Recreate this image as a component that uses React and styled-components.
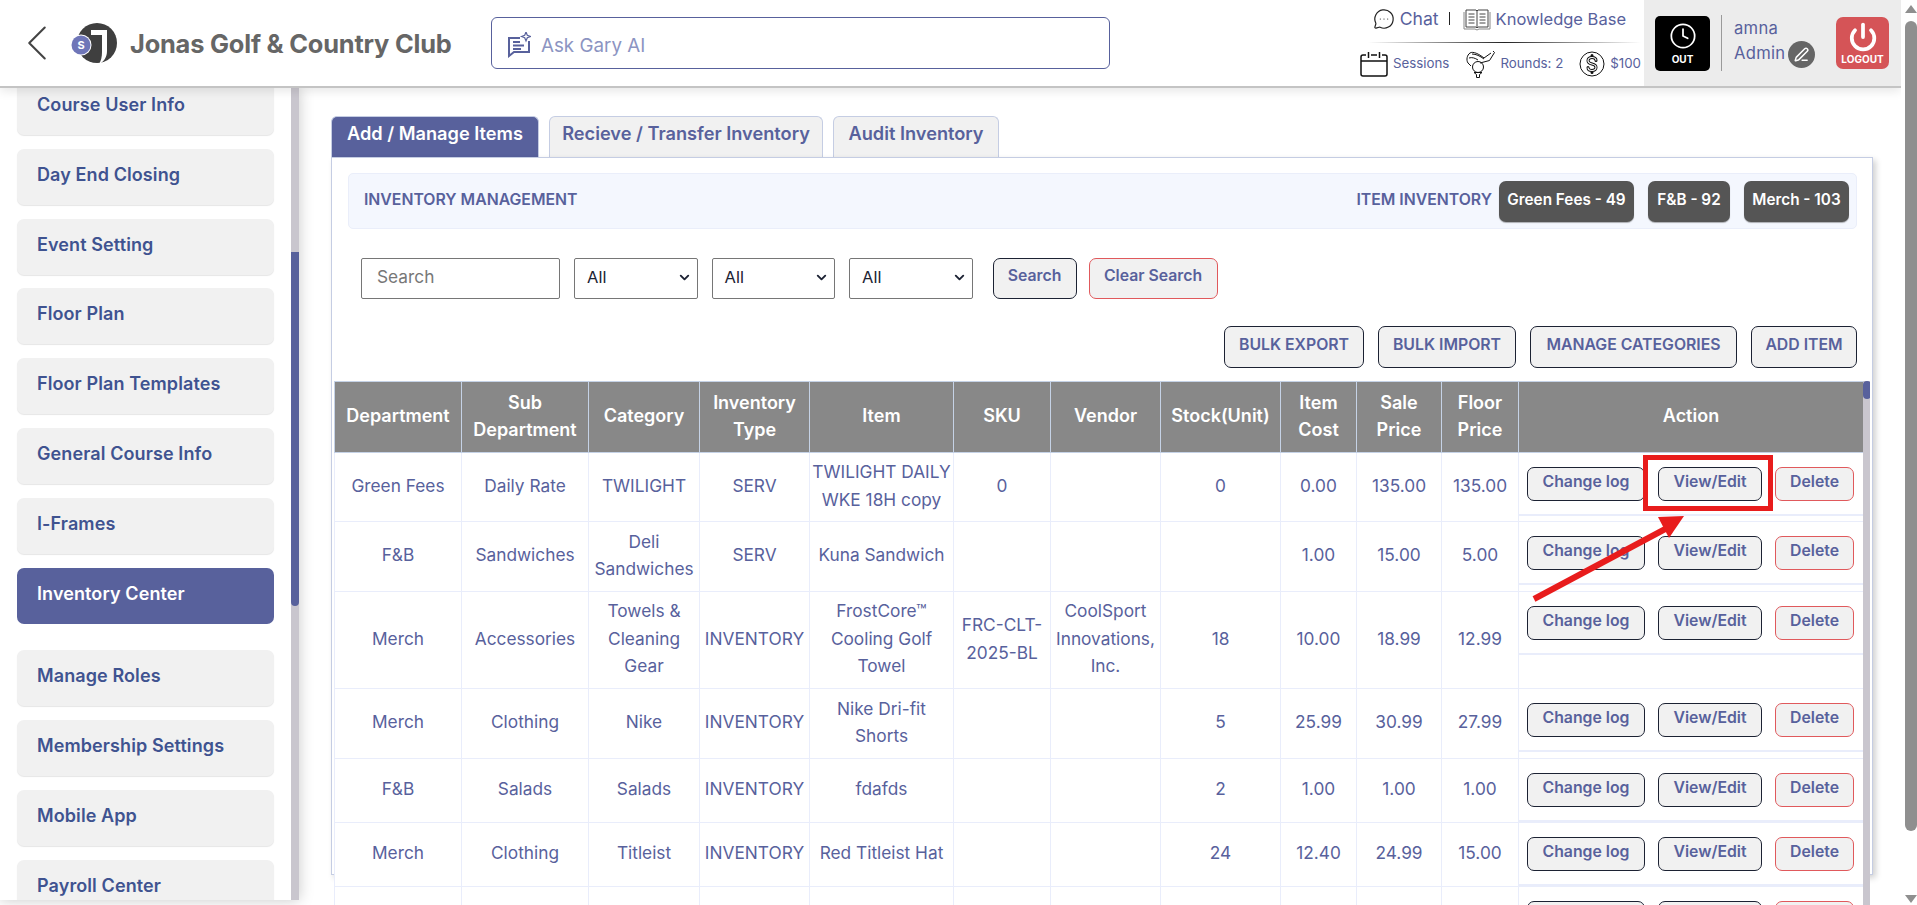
import React from 'react';
import styled, { createGlobalStyle } from 'styled-components';
import { ChevronLeft, Clock, Power, PenLine, MessageCircleMore, ChevronDown } from 'lucide-react';

const GlobalStyle = createGlobalStyle`
    html, body {
        margin: 0;
        height: 100%;
        overflow: hidden;
        background: #fff;
        font-family: "Inter", "Liberation Sans", sans-serif;
    }
    * { box-sizing: border-box; }
`;

const Page = styled.div`
    display: flex;
    width: 1917px;
    height: 905px;
    overflow: hidden;
`;

const Content = styled.div`
    width: 1901px;
    height: 905px;
    display: flex;
    flex-direction: column;
    overflow: hidden;
`;

const PageScroll = styled.div`
    width: 16px;
    height: 905px;
    display: flex;
    flex-direction: column;
    align-items: flex-end;
    background: #fff;
    padding-top: 5px;
`;

const ArrowUp = styled.div`
    width: 0;
    height: 0;
    border-left: 6px solid transparent;
    border-right: 6px solid transparent;
    border-bottom: 8px solid #8f8f8f;
`;

const ArrowDown = styled(ArrowUp)`
    margin-top: 64px;
    border-bottom: 0;
    border-top: 8px solid #8f8f8f;
`;

const PageThumb = styled.div`
    width: 12px;
    height: 810px;
    margin-top: 8px;
    background: #8f8f8f;
    border-radius: 6px;
`;

/* header */
const Header = styled.header`
    height: 88px;
    flex: none;
    display: flex;
    align-items: stretch;
    background: #fff;
    border-bottom: 2px solid #c4c4c4;
    box-shadow: 0 3px 10px rgba(0, 0, 0, 0.1);
    position: relative;
    z-index: 3;
`;

const Brand = styled.div`
    width: 491px;
    flex: none;
    display: flex;
    align-items: center;
    padding-left: 6px;
`;

const BackIcon = styled(ChevronLeft)`
    width: 62px;
    height: 62px;
    color: #444;
    stroke-width: 0.8;
    flex: none;
`;

const LogoBox = styled.svg`
    width: 52px;
    height: 44px;
    flex: none;
`;

const BrandName = styled.h1`
    margin: 0 0 0 10px;
    font-size: 25.4px;
    font-weight: 700;
    letter-spacing: -0.2px;
    color: #666;
    white-space: nowrap;
`;

const AskBox = styled.div`
    width: 619px;
    height: 52px;
    margin-top: 17px;
    flex: none;
    display: flex;
    align-items: center;
    gap: 10px;
    padding: 4px 0 0 15px;
    border: 1px solid #58619c;
    border-radius: 6px;
`;

const AskText = styled.span`
    font-size: 18.8px;
    color: #8c94c2;
`;

const Links = styled.div`
    flex: 1;
    display: flex;
    flex-direction: column;
    align-items: flex-end;
    padding-right: 3px;
`;

const LinkRow = styled.div`
    height: 42px;
    display: flex;
    align-items: center;
    gap: 5px;
    padding: 0 15px 5px 0;
    color: #58619c;
    font-size: 16.5px;
`;

const ChatLabel = styled.span`
    font-size: 17.6px;
`;

const Sep = styled.span`
    width: 1px;
    height: 13px;
    margin: 0 8px 0 5px;
    background: #222;
`;

const Rule = styled.div`
    width: 273px;
    height: 1px;
    flex: none;
    background: linear-gradient(90deg, transparent, #222 50%, transparent);
`;

const StatRow = styled.div`
    display: flex;
    align-items: center;
    gap: 5px;
    height: 42px;
    color: #58619c;
    font-size: 13.3px;
`;

const StatText = styled.span`
    padding-bottom: 2px;
`;

const StatGap = styled.span`
    width: 6px;
`;

const UserBlock = styled.div`
    width: 257px;
    flex: none;
    display: flex;
    align-items: center;
    background: #ececec;
    padding-left: 11px;
`;

const OutButton = styled.div`
    width: 55px;
    height: 55px;
    flex: none;
    display: flex;
    flex-direction: column;
    align-items: center;
    justify-content: center;
    gap: 3px;
    background: #000;
    border-radius: 5px;
    color: #fff;
    font-size: 10px;
    font-weight: 700;
`;

const UserDivider = styled.div`
    width: 1px;
    height: 56px;
    margin: 0 12px 0 11px;
    background: #9a9a9a;
`;

const UserInfo = styled.div`
    width: 102px;
    flex: none;
    margin-bottom: 2px;
    color: #58619c;
    font-size: 16.6px;
    letter-spacing: 0.3px;
`;

const UserName = styled.div`
    line-height: 25px;
`;

const RoleRow = styled.div`
    display: flex;
    align-items: center;
    gap: 3px;
    height: 28px;
`;

const RoleLabel = styled.span`
    padding-bottom: 4px;
`;

const EditBadge = styled.span`
    width: 27px;
    height: 27px;
    display: inline-flex;
    align-items: center;
    justify-content: center;
    background: #666;
    border-radius: 50%;
    color: #fff;
`;

const LogoutButton = styled.div`
    width: 53px;
    height: 52px;
    flex: none;
    display: flex;
    flex-direction: column;
    align-items: center;
    justify-content: center;
    gap: 1px;
    background: #d55457;
    border-radius: 7px;
    color: #fff;
    font-size: 10px;
    font-weight: 700;
`;

/* body */
const Body = styled.div`
    flex: 1;
    display: flex;
    min-height: 0;
    overflow: hidden;
`;

const Sidebar = styled.aside`
    width: 299px;
    height: 812px;
    flex: none;
    display: flex;
    background: #fff;
    box-shadow: 0 0 14px rgba(0, 0, 0, 0.22);
    position: relative;
    z-index: 2;
`;

const SideList = styled.nav`
    width: 291px;
    padding: 0 17px;
    overflow: hidden;
`;

const SideInner = styled.div`
    margin-top: -9px;
    display: flex;
    flex-direction: column;
    gap: 13.8px;
`;

const SideItem = styled.div`
    height: 56px;
    flex: none;
    padding: 14px 0 0 20px;
    margin-bottom: ${p => (p.$active ? '13px' : '0')};
    background: ${p => (p.$active ? '#58619c' : '#f1f1f1')};
    border-radius: 7px;
    box-shadow: ${p => (p.$active ? 'none' : '0 1px 1px rgba(0, 0, 0, 0.1)')};
    color: ${p => (p.$active ? '#fff' : '#3f5390')};
    font-size: 18px;
    font-weight: 600;
    letter-spacing: 0.1px;
    line-height: 24px;
`;

const SideTrack = styled.div`
    width: 8px;
    background: #c9c6ce;
`;

const SideThumb = styled.div`
    width: 8px;
    height: 354px;
    margin-top: 164px;
    background: #58619c;
    border-radius: 0 0 4px 4px;
`;

const Main = styled.main`
    flex: 1;
    min-width: 0;
    padding: 28px 28px 0 32px;
`;

const Tabs = styled.div`
    display: flex;
    gap: 10px;
    height: 41px;
    align-items: flex-end;
`;

const Tab = styled.div`
    height: 41px;
    width: ${p => p.$w}px;
    display: flex;
    justify-content: center;
    padding-top: 5px;
    background: ${p => (p.$active ? '#58619c' : '#f1f1f1')};
    color: ${p => (p.$active ? '#fff' : '#58619c')};
    border: 1px solid #c5cde3;
    border-bottom: 0;
    border-radius: 6px 6px 0 0;
    font-size: 18.2px;
    font-weight: 600;
    white-space: nowrap;
`;

const Card = styled.section`
    height: 718px;
    padding: 15px 15px 0 16px;
    position: relative;
    border: 1px solid #c5cde3;
    box-shadow: 3px 3px 6px rgba(0, 0, 0, 0.18);
    background: #fff;
`;

const InfoStrip = styled.div`
    height: 56px;
    display: flex;
    align-items: center;
    padding: 0 7px 0 15px;
    background: #f4f7fe;
    border: 1px solid #eaeefa;
    border-radius: 5px;
`;

const StripTitle = styled.span`
    color: #58619c;
    font-size: 15.8px;
    font-weight: 600;
    padding-bottom: 3px;
`;

const StripLabel = styled(StripTitle)`
    margin-left: auto;
    margin-right: 7px;
`;

const Badge = styled.span`
    height: 41px;
    width: ${p => p.$w}px;
    display: flex;
    align-items: center;
    justify-content: center;
    padding-bottom: 3px;
    margin-left: ${p => p.$gap}px;
    background: #555;
    border-radius: 7px;
    color: #fff;
    font-size: 15.3px;
    font-weight: 600;
    box-shadow: 0 1px 1px rgba(0, 0, 0, 0.3);
`;

const Filters = styled.div`
    display: flex;
    gap: 14px;
    margin: 29px 0 0 13px;
    height: 41px;
`;

const SearchInput = styled.div`
    width: 199px;
    display: flex;
    align-items: center;
    padding: 0 15px 4px;
    border: 1px solid #767676;
    border-radius: 2px;
    color: #777;
    font-size: 17.3px;
`;

const Select = styled.div`
    width: 123.5px;
    display: flex;
    align-items: center;
    justify-content: space-between;
    padding: 0 5px 3px 12px;
    border: 1px solid #767676;
    border-radius: 2px;
    color: #1c2233;
    font-size: 16.5px;
`;

const Button = styled.div`
    width: ${p => p.$w}px;
    height: ${p => p.$h || 42}px;
    flex: none;
    display: flex;
    align-items: center;
    justify-content: center;
    padding-bottom: ${p => p.$lift || 6}px;
    margin-left: ${p => p.$push || 0}px;
    background: #f1f1f1;
    border: 1px solid ${p => (p.$danger ? '#e0595c' : '#1c2233')};
    border-radius: 7px;
    color: #58619c;
    font-size: 15.8px;
    font-weight: 600;
    white-space: nowrap;
`;

const ActionsBar = styled.div`
    display: flex;
    justify-content: flex-end;
    gap: 14px;
    margin-top: 27px;
`;

const TableWrap = styled.div`
    margin: 13px -13px 0 -14px;
    display: flex;
    height: 526px;
    overflow: hidden;
`;

const TableBox = styled.div`
    width: 1529px;
    flex: none;
`;

const Table = styled.table`
    width: 1529px;
    border-collapse: collapse;
    table-layout: fixed;
    background: #fff;
`;

const Col = styled.col`
    width: ${p => p.$w}px;
`;

const HeadRow = styled.tr`
    height: 71px;
    background: #888;
`;

const Th = styled.th`
    padding: 0 2px 2px;
    border: 1px solid #c5d2e6;
    color: #fff;
    font-size: 18px;
    font-weight: 600;
    line-height: 27.5px;
    text-align: center;
    white-space: pre-line;
`;

const Row = styled.tr`
    height: ${p => p.$h}px;
`;

const Td = styled.td`
    padding: 0 1px 3px;
    border: 1px solid #e9edfb;
    color: #58619c;
    font-size: 17.3px;
    line-height: 27.5px;
    text-align: center;
    white-space: pre-line;
`;

const ActionTd = styled(Td)`
    padding: 0;
    vertical-align: top;
`;

const ActionBox = styled.div`
    height: 63px;
    display: flex;
    gap: 13px;
    padding: 14px 0 0 8px;
    border-bottom: 2px solid #e9edfb;
`;

const TableScroll = styled.div`
    width: 8px;
    flex: none;
    background: #c9c6ce;
`;

const TableThumb = styled.div`
    width: 8px;
    height: 18px;
    background: #58619c;
    border-radius: 4px;
`;

const Overlay = styled.svg`
    position: absolute;
    left: 1643px;
    top: 455px;
    width: 135px;
    height: 150px;
    z-index: 5;
    overflow: visible;
`;

const items = [
    'Course User Info', 'Day End Closing', 'Event Setting', 'Floor Plan', 'Floor Plan Templates',
    'General Course Info', 'I-Frames', 'Inventory Center', 'Manage Roles', 'Membership Settings',
    'Mobile App', 'Payroll Center',
];

const colWidths = [127, 127, 111, 110, 144, 97, 110, 120, 76, 85, 77, 345];

const heads = [
    'Department', 'Sub\nDepartment', 'Category', 'Inventory\nType', 'Item', 'SKU', 'Vendor',
    'Stock(Unit)', 'Item\nCost', 'Sale\nPrice', 'Floor\nPrice', 'Action',
];

const rows = [
    { h: 69, cells: ['Green Fees', 'Daily Rate', 'TWILIGHT', 'SERV', 'TWILIGHT DAILY\nWKE 18H copy', '0', '', '0', '0.00', '135.00', '135.00'] },
    { h: 70, cells: ['F&B', 'Sandwiches', 'Deli\nSandwiches', 'SERV', 'Kuna Sandwich', '', '', '', '1.00', '15.00', '5.00'] },
    { h: 97, cells: ['Merch', 'Accessories', 'Towels &\nCleaning\nGear', 'INVENTORY', 'FrostCore™\nCooling Golf\nTowel', 'FRC-CLT-\n2025-BL', 'CoolSport\nInnovations,\nInc.', '18', '10.00', '18.99', '12.99'] },
    { h: 70, cells: ['Merch', 'Clothing', 'Nike', 'INVENTORY', 'Nike Dri-fit\nShorts', '', '', '5', '25.99', '30.99', '27.99'] },
    { h: 64, cells: ['F&B', 'Salads', 'Salads', 'INVENTORY', 'fdafds', '', '', '2', '1.00', '1.00', '1.00'] },
    { h: 64, cells: ['Merch', 'Clothing', 'Titleist', 'INVENTORY', 'Red Titleist Hat', '', '', '24', '12.40', '24.99', '15.00'] },
    { h: 64, blank: true, cells: ['', '', '', '', '', '', '', '', '', '', ''] },
];

const Logo = () => (
    <LogoBox viewBox="0 0 52 44">
        <circle cx="29" cy="22" r="20" fill="#3f3f3f" />
        <path d="M23 9h16v21c0 6-3 10-7 13h-1c2-3 3-7 3-12V14h-11z" fill="#fff" />
        <circle cx="13" cy="24" r="10.5" fill="#fff" />
        <circle cx="13" cy="24" r="9.5" fill="#6f76b8" />
        <text x="13" y="28" fontSize="11" fontWeight="700" fill="#fff" textAnchor="middle" fontFamily="Inter">S</text>
    </LogoBox>
);

const AskIcon = () => (
    <svg width="24" height="26" viewBox="0 0 24 26" fill="none" stroke="#58619c" strokeWidth="2">
        <path d="M13 6H2v18l5-4h15V9" />
        <path d="M6 10h7M6 13.5h11M6 17h8" />
        <path d="M19 0l1.3 3.2L23.5 4.500l-3.200 1.300L19 9l-1.300-3.200L14.500 4.500l3.200-1.300z" strokeWidth="1.200" />
    </svg>
);

const BookIcon = () => (
    <svg width="28" height="24" viewBox="0 0 28 24" fill="none" stroke="#444" strokeWidth="1">
        <path d="M3 3h10l1 1 1-1h10v17H15l-1 1-1-1H3z" />
        <path d="M1 5v17h11l2 1 2-1h11V5" stroke="#888" />
        <path d="M14 4v17M5.500 7h6M5.500 10h6M5.500 13h6M5.500 16h6M16.500 7h6M16.500 10h6M16.500 13h6M16.500 16h6" />
    </svg>
);

const CalendarIcon = () => (
    <svg width="28" height="26" viewBox="0 0 28 26" fill="none" stroke="#111" strokeWidth="1.500">
        <path d="M6 4H3a2 2 0 0 0-2 2v17a2 2 0 0 0 2 2h22a2 2 0 0 0 2-2V6a2 2 0 0 0-2-2h-3M11 4h6" />
        <path d="M8.500 1v6M19.500 1v6M1 10h26" />
    </svg>
);

const GolfIcon = () => (
    <svg width="30" height="28" viewBox="0 0 30 28" fill="none" stroke="#111" strokeWidth="1">
        <path d="M28 1l1.500 1.500-5 8L15 13" />
        <path d="M26 3l-7 5C14 4 8 1 5 3 2 5 1 10 3 13l3 3" />
        <path d="M7 4c4 0 8 2 12 5M4 8c3-1 6 0 9 2" />
        <circle cx="13" cy="17" r="5.500" />
        <path d="M9 22.500h8l-2.500 2v3h-3v-3z" />
    </svg>
);

const DollarIcon = () => (
    <svg width="26" height="26" viewBox="0 0 26 26" fill="none" stroke="#111">
        <circle cx="13" cy="13" r="12" strokeWidth="1" />
        <path d="M17 9.500c0-2-2-3-4-3s-4 1-4 3.200 2 2.800 4 3.300 4 1 4 3.300-2 3.200-4 3.200-4-1-4-3M13 4.500v2M13 19.500v2" strokeWidth="3" strokeLinecap="round" />
        <path d="M17 9.500c0-2-2-3-4-3s-4 1-4 3.200 2 2.800 4 3.300 4 1 4 3.300-2 3.200-4 3.200-4-1-4-3" stroke="#fff" strokeWidth="1.200" />
    </svg>
);

// the last row only shows the top edge of its buttons, the labels are below the fold
const ActionButtons = ({ blank }) => (
    <ActionBox>
        <Button $w={118} $h={34} $lift={5}>{!blank && 'Change log'}</Button>
        <Button $w={104} $h={34} $lift={5}>{!blank && 'View/Edit'}</Button>
        <Button $w={79} $h={34} $lift={5} $danger>{!blank && 'Delete'}</Button>
    </ActionBox>
);

const App = () => {
    return (
        <Page>
            <GlobalStyle />
            <Content>
                <Header>
                    <Brand>
                        <BackIcon />
                        <Logo />
                        <BrandName>Jonas Golf &amp; Country Club</BrandName>
                    </Brand>
                    <AskBox>
                        <AskIcon />
                        <AskText>Ask Gary AI</AskText>
                    </AskBox>
                    <Links>
                        <LinkRow>
                            <MessageCircleMore size={22} color="#222" strokeWidth={1.3} />
                            <ChatLabel>Chat</ChatLabel>
                            <Sep />
                            <BookIcon />
                            Knowledge Base
                        </LinkRow>
                        <Rule />
                        <StatRow>
                            <CalendarIcon />
                            <StatText>Sessions</StatText>
                            <StatGap />
                            <GolfIcon />
                            <StatText>Rounds: 2</StatText>
                            <StatGap />
                            <DollarIcon />
                            <StatText>$100</StatText>
                        </StatRow>
                    </Links>
                    <UserBlock>
                        <OutButton>
                            <Clock size={28} strokeWidth={1.5} />
                            OUT
                        </OutButton>
                        <UserDivider />
                        <UserInfo>
                            <UserName>amna</UserName>
                            <RoleRow>
                                <RoleLabel>Admin</RoleLabel>
                                <EditBadge><PenLine size={15} strokeWidth={2.4} /></EditBadge>
                            </RoleRow>
                        </UserInfo>
                        <LogoutButton>
                            <Power size={30} strokeWidth={3} />
                            LOGOUT
                        </LogoutButton>
                    </UserBlock>
                </Header>
                <Body>
                    <Sidebar>
                        <SideList>
                            <SideInner>
                                {items.map(name => (
                                    <SideItem key={name} $active={name === 'Inventory Center'}>{name}</SideItem>
                                ))}
                            </SideInner>
                        </SideList>
                        <SideTrack><SideThumb /></SideTrack>
                    </Sidebar>
                    <Main>
                        <Tabs>
                            <Tab $w={208} $active>Add / Manage Items</Tab>
                            <Tab $w={274}>Recieve / Transfer Inventory</Tab>
                            <Tab $w={166}>Audit Inventory</Tab>
                        </Tabs>
                        <Card>
                            <InfoStrip>
                                <StripTitle>INVENTORY MANAGEMENT</StripTitle>
                                <StripLabel>ITEM INVENTORY</StripLabel>
                                <Badge $w={135} $gap={0}>Green Fees - 49</Badge>
                                <Badge $w={82} $gap={14}>F&amp;B - 92</Badge>
                                <Badge $w={105} $gap={14}>Merch - 103</Badge>
                            </InfoStrip>
                            <Filters>
                                <SearchInput>Search</SearchInput>
                                {[0, 1, 2].map(i => (
                                    <Select key={i}>All <ChevronDown size={15} strokeWidth={3} /></Select>
                                ))}
                                <Button $w={84} $h={41} $push={6}>Search</Button>
                                <Button $w={129} $h={41} $push={-2} $danger>Clear Search</Button>
                            </Filters>
                            <ActionsBar>
                                <Button $w={140}>BULK EXPORT</Button>
                                <Button $w={138}>BULK IMPORT</Button>
                                <Button $w={207}>MANAGE CATEGORIES</Button>
                                <Button $w={106}>ADD ITEM</Button>
                            </ActionsBar>
                            <TableWrap>
                                <TableBox>
                                    <Table>
                                        <colgroup>
                                            {colWidths.map((w, i) => <Col key={i} $w={w} />)}
                                        </colgroup>
                                        <thead>
                                            <HeadRow>
                                                {heads.map(h => <Th key={h}>{h}</Th>)}
                                            </HeadRow>
                                        </thead>
                                        <tbody>
                                            {rows.map((r, i) => (
                                                <Row key={i} $h={r.h}>
                                                    {r.cells.map((c, j) => <Td key={j}>{c}</Td>)}
                                                    <ActionTd><ActionButtons blank={r.blank} /></ActionTd>
                                                </Row>
                                            ))}
                                        </tbody>
                                    </Table>
                                </TableBox>
                                <TableScroll><TableThumb /></TableScroll>
                            </TableWrap>
                        </Card>
                    </Main>
                </Body>
            </Content>
            <PageScroll>
                <ArrowUp />
                <PageThumb />
                <ArrowDown />
            </PageScroll>
            <Overlay viewBox="0 0 135 150">
                <rect x="2.500" y="2.500" width="125" height="51" fill="none" stroke="#e81c1c" strokeWidth="5" />
                <path d="M-109 144 L26 72" stroke="#e81c1c" strokeWidth="6" fill="none" />
                <polygon points="15,62 41,61 26,83" fill="#e81c1c" />
            </Overlay>
        </Page>
    );
};

export default App;
